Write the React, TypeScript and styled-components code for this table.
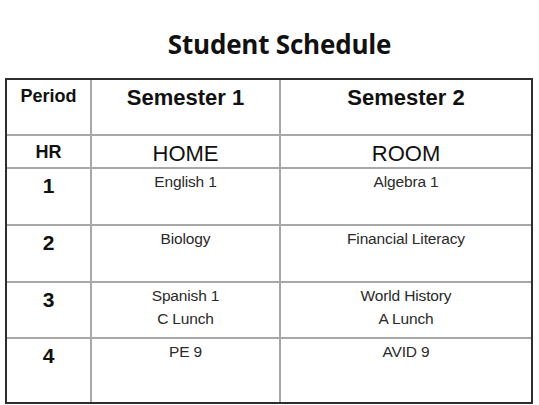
import React from "react";
import styled, { createGlobalStyle } from "styled-components";

const GlobalStyle = createGlobalStyle`
  html, body { margin: 0; padding: 0; background: #ffffff; }
  body { width: 539px; height: 405px; overflow: hidden; }
`;

const Page = styled.div`
  width: 539px;
  height: 405px;
  box-sizing: border-box;
  padding: 24px 0 0 5px;
  display: flex;
  flex-direction: column;
`;

const Title = styled.h1`
  margin: 0;
  box-sizing: border-box;
  width: 528px;
  height: 54px;
  padding-left: 21px;
  text-align: center;
  font-family: "Open Sans", "Noto Sans", sans-serif;
  font-weight: 700;
  font-size: 26px;
  line-height: 40px;
  color: #111;
  letter-spacing: -0.2px;
`;

const Table = styled.table`
  width: 528px;
  table-layout: fixed;
  border-collapse: separate;
  border-spacing: 0;
  border: 2px solid #2e2e2e;
  font-family: "Liberation Sans", Arial, sans-serif;
`;

const Col = styled.col<{ $w: number }>`
  width: ${(p) => p.$w}px;
`;

const Row = styled.tr<{ $h: number }>`
  height: ${(p) => p.$h}px;
  &:last-child td { border-bottom: none; }
`;

type Kind = "head" | "label" | "num" | "big" | "course";

const pad: Record<Kind, string> = {
  head: "5px 0 0",
  label: "6px 0 0",
  num: "5px 0 0",
  big: "5px 0 0",
  course: "2px 0 0",
};

const size: Record<Kind, string> = {
  head: "22px",
  big: "22px",
  num: "21px",
  label: "18px",
  course: "15.5px",
};

const Cell = styled.td<{ $kind: Kind }>`
  box-sizing: border-box;
  vertical-align: top;
  text-align: center;
  padding: ${(p) => pad[p.$kind]};
  border-right: 2px solid #a8a8a8;
  border-bottom: 2px solid #a8a8a8;
  &:last-child { border-right: none; }
  color: ${(p) => (p.$kind === "course" ? "#2a2a2a" : "#111")};
  font-weight: ${(p) => (p.$kind === "big" || p.$kind === "course" ? 400 : 700)};
  font-size: ${(p) => size[p.$kind]};
  line-height: ${(p) => (p.$kind === "course" ? "22.5px" : "1.15")};
  letter-spacing: ${(p) => (p.$kind === "course" ? "-0.15px" : "0")};
`;

type Slot = { p: string; s1: string[]; s2: string[]; h: number };

const slots: Slot[] = [
  { p: "1", s1: ["English 1"], s2: ["Algebra 1"], h: 57 },
  { p: "2", s1: ["Biology"], s2: ["Financial Literacy"], h: 57 },
  { p: "3", s1: ["Spanish 1", "C Lunch"], s2: ["World History", "A Lunch"], h: 56 },
  { p: "4", s1: ["PE 9"], s2: ["AVID 9"], h: 63 },
];

const Lines = ({ lines }: { lines: string[] }) => (
  <>
    {lines.map((l, i) => (
      <div key={i}>{l}</div>
    ))}
  </>
);

export default function App() {
  return (
    <>
      <GlobalStyle />
      <Page>
        <Title>Student Schedule</Title>
        <Table>
          <colgroup>
            <Col $w={85} />
            <Col $w={189} />
            <Col $w={250} />
          </colgroup>
          <tbody>
            <Row $h={56}>
              <Cell $kind="label">Period</Cell>
              <Cell $kind="head">Semester 1</Cell>
              <Cell $kind="head">Semester 2</Cell>
            </Row>
            <Row $h={33}>
              <Cell $kind="label">HR</Cell>
              <Cell $kind="big">HOME</Cell>
              <Cell $kind="big">ROOM</Cell>
            </Row>
            {slots.map((s) => (
              <Row key={s.p} $h={s.h}>
                <Cell $kind="num">{s.p}</Cell>
                <Cell $kind="course">
                  <Lines lines={s.s1} />
                </Cell>
                <Cell $kind="course">
                  <Lines lines={s.s2} />
                </Cell>
              </Row>
            ))}
          </tbody>
        </Table>
      </Page>
    </>
  );
}
